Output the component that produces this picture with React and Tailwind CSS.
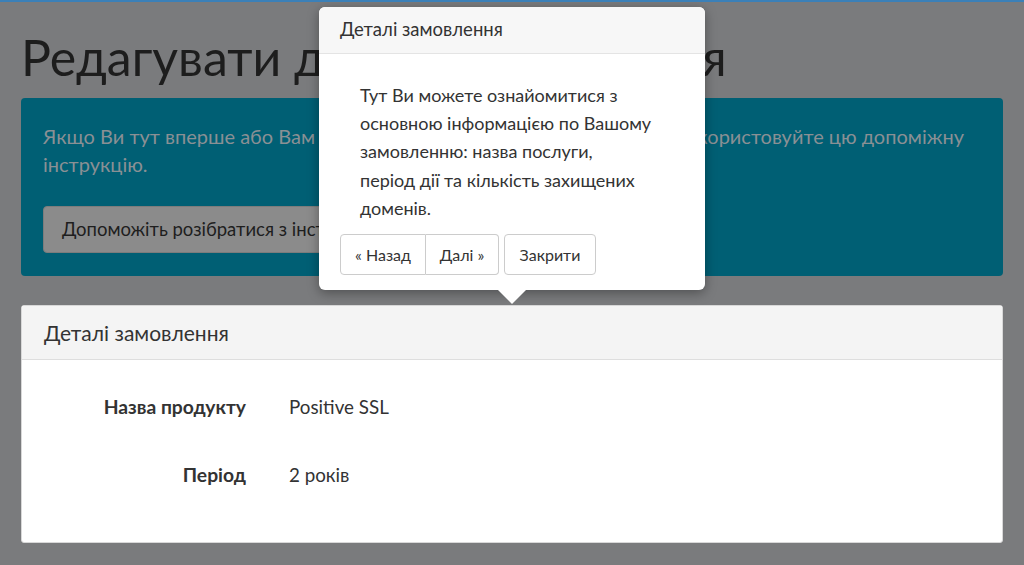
import * as React from 'react'

const font = { fontFamily: '"Lato", "Noto Sans", sans-serif' }

function Popover() {
  return (
    <div className="absolute left-[319px] top-[5px] w-[386px] h-[283px] bg-white rounded-[6px] shadow-[0_3px_12px_rgba(0,0,0,0.35)]">
      <div className="h-[47px] bg-[#f7f7f7] border-b border-[#e4e4e4] rounded-t-[6px] px-[21px] flex items-center">
        <p className="text-[18.5px] text-[#333]">Деталі замовлення</p>
      </div>
      <div className="pt-[27px] pl-[41px] pr-[20px]">
        <p className="text-[18px] leading-[28.2px] text-[#333]">
          Тут Ви можете ознайомитися з
          <br />
          основною інформацією по Вашому
          <br />
          замовленню: назва послуги,
          <br />
          період дії та кількість захищених
          <br />
          доменів.
        </p>
      </div>
      <div className="flex gap-[5px] pl-[21px] mt-[12px]">
        <div className="flex">
          <button className="h-[41px] w-[86px] border border-[#ccc] rounded-l-[4px] text-[16px] text-[#333]">
            « Назад
          </button>
          <button className="h-[41px] w-[73px] border border-l-0 border-[#ccc] rounded-r-[4px] text-[16px] text-[#333]">
            Далі »
          </button>
        </div>
        <button className="h-[41px] w-[92px] border border-[#ccc] rounded-[4px] text-[16px] text-[#333]">
          Закрити
        </button>
      </div>
      <div className="absolute left-[178px] top-[282px] w-0 h-0 border-l-[15px] border-r-[15px] border-t-[15px] border-l-transparent border-r-transparent border-t-white" />
    </div>
  )
}

export default function App() {
  return (
    <div style={font} className="relative w-[1024px] h-[565px] overflow-hidden bg-[#7a7b7d] border-t-2 border-[#3b80b8]">
      <div className="px-[21px]">
        <h1 className="pt-[25px] text-[50px] leading-[60px] text-[#1d1d1d] whitespace-nowrap">Редагувати деталі замовлення</h1>

        <div className="mt-[11px] h-[178px] bg-[#005f74] rounded-[4px] px-[22px] pt-[24px]">
          <p className="text-[20px] leading-[28px] text-[#8a9094] whitespace-nowrap">
            Якщо Ви тут вперше або Вам незрозуміло як заповнити всю форму, використовуйте цю допоміжну
            <br />
            інструкцію.
          </p>
          <button className="mt-[28px] h-[47px] px-[18px] bg-[#8b8b8b] border border-[#7c7c7c] rounded-[4px] text-[18.5px] text-[#1e1e1e]">
            Допоможіть розібратися з інструкцією
          </button>
        </div>

        <div className="mt-[29px] h-[238px] bg-white border border-[#d8d8d8] rounded-[3px]">
          <div className="h-[54px] bg-[#f4f4f4] border-b border-[#dedede] px-[22px] flex items-center">
            <p className="text-[21px] text-[#333]">Деталі замовлення</p>
          </div>
          <div className="pt-[31px]">
            <div className="flex items-center h-[32px]">
              <div className="w-[224px] text-right text-[19.3px] font-bold text-[#333]">Назва продукту</div>
              <div className="pl-[43px] text-[18.8px] text-[#333]">Positive SSL</div>
            </div>
            <div className="flex items-center h-[32px] mt-[36px]">
              <div className="w-[224px] text-right text-[19.3px] font-bold text-[#333]">Період</div>
              <div className="pl-[43px] text-[18.8px] text-[#333]">2 років</div>
            </div>
          </div>
        </div>
      </div>

      <Popover />
    </div>
  )
}
